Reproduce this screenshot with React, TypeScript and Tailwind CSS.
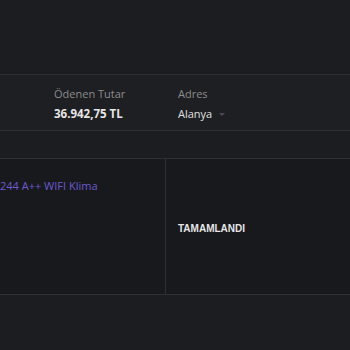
export default function App() {
  return (
    <div className="w-[350px] h-[350px] overflow-hidden bg-[#1c1d20] text-[11px]" style={{ fontFamily: '"Open Sans", sans-serif' }}>
      <div className="h-[75px] bg-[#1c1d20] border-b border-[#2f3034]" />

      {/* summary row */}
      <div className="h-[56px] bg-[#1e1f22] border-b border-[#2f3034] flex">
        <div className="w-[54px]" />
        <div className="w-[124px] pt-[11px]">
          <div className="text-[#8b8b8b] leading-[16px]">Ödenen Tutar</div>
          <div className="text-[#e6e6e6] font-bold text-[11.5px] leading-[16px] mt-[4px]">36.942,75 TL</div>
        </div>
        <div className="pt-[11px]">
          <div className="text-[#8b8b8b] leading-[16px]">Adres</div>
          <div className="flex items-center gap-[7px] text-[#e0e0e0] leading-[16px] mt-[4px]">
            Alanya
            <span className="w-0 h-0 border-l-[3px] border-r-[3px] border-t-[3px] border-l-transparent border-r-transparent border-t-[#4a4b50]" />
          </div>
        </div>
      </div>

      <div className="h-[28px] bg-[#1c1d20] border-b border-[#2f3034]" />

      {/* table row */}
      <div className="h-[136px] bg-[#18191c] border-b border-[#2f3034] flex">
        <div className="w-[166px] border-r border-[#2f3034] pt-[19px]">
          <span className="text-[#6c5ad0] leading-[16px] whitespace-nowrap">244 A++ WIFI Klima</span>
        </div>
        <div className="flex-1 flex items-center pl-[12px] pt-[3px]">
          <span
            className="text-[#e6e6e6] font-bold text-[10px]"
            style={{ fontFamily: '"Liberation Sans", Arial, sans-serif' }}
          >
            TAMAMLANDI
          </span>
        </div>
      </div>
    </div>
  );
}
